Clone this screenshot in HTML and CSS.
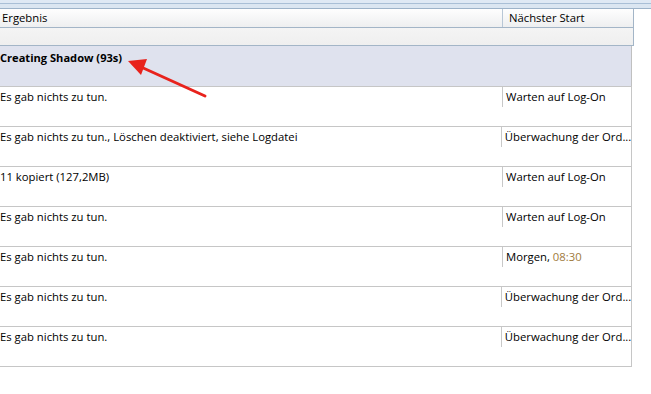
FILE: index.html
```html
<!DOCTYPE html>
<html lang="de">
<head>
<meta charset="utf-8">
<link rel="stylesheet" href="styles.css">
</head>
<body>
<div class="page">
  <div class="topbar"><div class="band1"></div><div class="band2"></div></div>
  <div class="grid">
    <div class="header">
      <div class="col1">Ergebnis</div>
      <div class="col2">Nächster Start</div>
    </div>
    <div class="filter"></div>
    <div class="group">Creating Shadow (93s)</div>
    <div class="row"><div class="c1">Es gab nichts zu tun.</div><div class="c2">Warten auf Log-On</div></div>
    <div class="row"><div class="c1">Es gab nichts zu tun., Löschen deaktiviert, siehe Logdatei</div><div class="c2">Überwachung der Ord...</div></div>
    <div class="row"><div class="c1">11 kopiert (127,2MB)</div><div class="c2">Warten auf Log-On</div></div>
    <div class="row"><div class="c1">Es gab nichts zu tun.</div><div class="c2">Warten auf Log-On</div></div>
    <div class="row"><div class="c1">Es gab nichts zu tun.</div><div class="c2">Morgen, <span class="time">08:30</span></div></div>
    <div class="row"><div class="c1">Es gab nichts zu tun.</div><div class="c2">Überwachung der Ord...</div></div>
    <div class="row"><div class="c1">Es gab nichts zu tun.</div><div class="c2">Überwachung der Ord...</div></div>
  </div>
  <svg class="arrow" width="651" height="394" viewBox="0 0 651 394">
    <line x1="205" y1="96" x2="141" y2="67" stroke="#e8221c" stroke-width="3" stroke-linecap="round"/>
    <polygon points="128,61 147,59 141,75" fill="#e8221c"/>
  </svg>
</div>
</body>
</html>
```
FILE: styles.css
```css
html, body { margin: 0; padding: 0; background: #fff; }
body { font-family: "Open Sans", "Noto Sans", sans-serif; font-size: 11.3px; color: #000; }
.page { position: relative; width: 651px; height: 394px; overflow: hidden; }
.topbar { width: 651px; }
.band1 { height: 3px; background: #dfe9f4; border-bottom: 1px solid #a9bfd6; }
.band2 { height: 4px; background: #dbe6f1; border-bottom: 1px solid #9db3c9; }
.grid { width: 633px; }
.header { display: flex; height: 18px; width: 633px; background: linear-gradient(#fefefe, #eeeff0); border-bottom: 1px solid #a3b5c7; border-right: 1px solid #a3b5c7; box-sizing: content-box; }
.header .col1 { width: 503px; padding-left: 2px; box-sizing: border-box; border-right: 1px solid #b8c7d6; line-height: 18px; }
.header .col2 { padding-left: 6px; line-height: 18px; }
.filter { height: 17px; width: 633px; background: linear-gradient(#f4f4f4, #efefef); border-bottom: 1px solid #a3b5c7; border-right: 1px solid #a3b5c7; }
.group { height: 40px; width: 632px; background: #dfe2ee; border-right: 1px solid #c0c0c0; font-weight: bold; font-size: 11.1px; padding-top: 4px; box-sizing: border-box; line-height: 16px; }
.row { display: flex; height: 40px; width: 632px; border-top: 1px solid #c6c6c6; border-right: 1px solid #c6c6c6; box-sizing: border-box; }
.row:last-child { border-bottom: 1px solid #c6c6c6; height: 41px; }
.c1 { width: 502px; padding-top: 2px; line-height: 16px; white-space: nowrap; }
.c2 { height: 20px; border-left: 1px solid #c8c8c8; padding-left: 3px; padding-top: 2px; line-height: 16px; white-space: nowrap; box-sizing: border-box; overflow: hidden; }
.time { color: #a07a3c; }
.arrow { position: absolute; left: 0; top: 0; pointer-events: none; }
```
